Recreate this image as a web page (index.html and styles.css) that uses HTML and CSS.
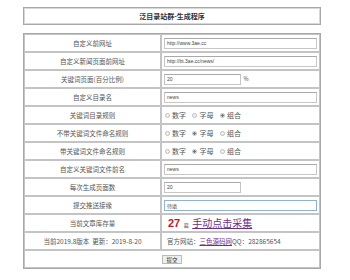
FILE: index.html
```html
<!DOCTYPE html>
<html lang="zh-CN">
<head>
  <meta charset="UTF-8" />
  <title>泛目录站群-生成程序</title>
  <link rel="stylesheet" href="styles.css">
</head>
<body>

<div class="page">
  <table class="title-table">
    <tr><td>泛目录站群-生成程序</td></tr>
  </table>

  <form class="gen-form">
    <table class="form-table">
      <tr>
        <td class="label">自定义前网址</td>
        <td><input type="text" class="txt" value="http://www.3ae.cc"></td>
      </tr>
      <tr>
        <td class="label">自定义新闻页面前网址</td>
        <td><input type="text" class="txt" value="http://bt.3ae.cc/news/"></td>
      </tr>
      <tr>
        <td class="label">关键词页面(百分比例)</td>
        <td><input type="text" class="txt short" value="20"> <span class="unit">%</span></td>
      </tr>
      <tr>
        <td class="label">自定义目录名</td>
        <td><input type="text" class="txt" value="news"></td>
      </tr>
      <tr>
        <td class="label">关键词目录规则</td>
        <td class="radios">
          <label><input type="radio" name="r1">数字</label>
          <label><input type="radio" name="r1">字母</label>
          <label><input type="radio" name="r1" checked>组合</label>
        </td>
      </tr>
      <tr>
        <td class="label">不带关键词文件命名规则</td>
        <td class="radios">
          <label><input type="radio" name="r2">数字</label>
          <label><input type="radio" name="r2" checked>字母</label>
          <label><input type="radio" name="r2">组合</label>
        </td>
      </tr>
      <tr>
        <td class="label">带关键词文件命名规则</td>
        <td class="radios">
          <label><input type="radio" name="r3">数字</label>
          <label><input type="radio" name="r3" checked>字母</label>
          <label><input type="radio" name="r3">组合</label>
        </td>
      </tr>
      <tr>
        <td class="label">自定义关键词文件前名</td>
        <td><input type="text" class="txt" value="news"></td>
      </tr>
      <tr>
        <td class="label">每次生成页面数</td>
        <td><input type="text" class="txt short" value="20"></td>
      </tr>
      <tr>
        <td class="label">提交推送接缘</td>
        <td><input type="text" class="txt focus" value="待填"></td>
      </tr>
      <tr>
        <td class="label">当前文章库存量</td>
        <td class="stock"><span class="count">27</span> <span class="pian">篇</span> <a href="#" class="collect">手动点击采集</a></td>
      </tr>
      <tr>
        <td class="label">当前2019.8版本&nbsp; 更新：2019-8-20</td>
        <td class="site">官方网站：<a href="#">三色源码网</a>QQ：282865654</td>
      </tr>
      <tr>
        <td colspan="2" class="submit-cell"><button type="submit" class="btn">提交</button></td>
      </tr>
    </table>
  </form>
</div>

</body>
</html>
```

FILE: styles.css
```css
* {
  margin: 0;
  padding: 0;
  box-sizing: border-box;
  font-family: "Noto Sans CJK SC", "Liberation Sans", sans-serif;
}

body {
  background: #fff;
  color: #444;
}

.page {
  width: 298px;
  margin-left: 23px;
  padding-top: 7px;
}

.title-table,
.form-table {
  width: 100%;
  border-collapse: separate;
  border-spacing: 0;
  border: 1px solid #a8a8a8;
}

.title-table td {
  height: 16px;
  border: 1px solid #d8d8d8;
  text-align: center;
  font-size: 7px;
  font-weight: bold;
  color: #333;
}

.gen-form {
  margin-top: 8px;
}

.form-table td {
  height: 18px;
  border: 1px solid #c4c4c4;
  font-size: 6.5px;
  line-height: 1;
  padding: 0 2px;
  vertical-align: middle;
}

.form-table td.label {
  width: 137px;
  text-align: center;
  color: #555;
}

.txt {
  width: 100%;
  height: 11px;
  border: 1px solid #c6c6c6;
  border-top-color: #a9a9a9;
  padding: 0 2px;
  font-size: 5px;
  font-family: "Liberation Sans", sans-serif;
  color: #444;
  outline: none;
}

.txt.short {
  width: 77px;
}

.txt.focus {
  border: 1px solid #8eb0dc;
}

.unit {
  font-size: 5.5px;
  margin-left: 1px;
}

.radios label {
  display: inline-flex;
  align-items: center;
  margin-right: 4px;
  font-size: 7px;
  color: #555;
}

.radios input {
  appearance: none;
  width: 5px;
  height: 5px;
  margin: 0 2px 0 1px;
  border: 1px solid #bdbdbd;
  border-radius: 50%;
  background: #f2f2f2;
}

.radios input:checked {
  background: radial-gradient(circle, #777 0 1px, #f2f2f2 1.5px);
}

.stock {
  padding-left: 6px !important;
}

.count {
  color: #c8161d;
  font-weight: bold;
  font-size: 11px;
  font-family: "Liberation Sans", sans-serif;
}

.pian {
  font-size: 5px;
  margin: 0 2px;
}

.collect {
  color: #6b2f8c;
  font-size: 10px;
}

.site {
  padding-left: 5px !important;
  color: #555;
}

.site a {
  color: #6b2f8c;
}

.submit-cell {
  text-align: center;
}

.btn {
  font-size: 5.5px;
  height: 9px;
  padding: 0 3px;
  border: 1px solid #bbb;
  background: #eee;
  color: #333;
}
```
